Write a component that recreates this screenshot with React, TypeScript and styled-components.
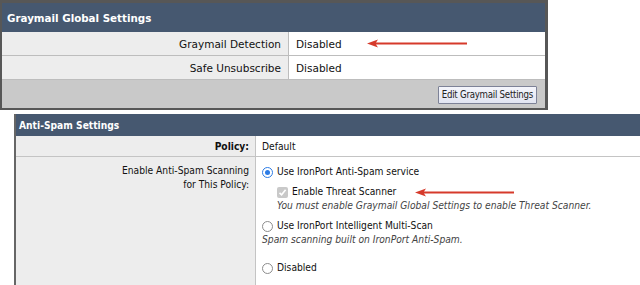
import React from "react";
import styled, { createGlobalStyle } from "styled-components";

const GlobalStyle = createGlobalStyle`
  html, body {
    margin: 0;
    padding: 0;
    background: #ffffff;
    overflow: hidden;
  }
  body {
    width: 640px;
    height: 285px;
    font-family: "DejaVu Sans", Verdana, sans-serif;
  }
`;

const Page = styled.div`
  display: flex;
  flex-direction: column;
  gap: 4px;
  width: 640px;
  height: 285px;
  overflow: hidden;
`;

/* ---------- Graymail panel ---------- */

const GrayPanel = styled.div`
  width: 543px;
  border-style: solid;
  border-color: #575757;
  border-width: 3px 3px 2px 2px;
  display: flex;
  flex-direction: column;
  font-size: 10.5px;
  color: #111;
`;

const PanelHead = styled.div<{ $small?: boolean }>`
  background: #465870;
  color: #fff;
  font-weight: bold;
  display: flex;
  align-items: center;
  height: ${(p) => (p.$small ? "22px" : "29px")};
  padding-left: ${(p) => (p.$small ? "3px" : "5px")};
  font-size: ${(p) => (p.$small ? "10.2px" : "10.3px")};
`;

const GrayRow = styled.div`
  display: grid;
  grid-template-columns: 287px 1fr;
  height: 23px;
  border-bottom: 1px solid #bdbdbd;
`;

const LabelCell = styled.div`
  background: #ededed;
  border-right: 1px solid #bdbdbd;
  display: flex;
  align-items: center;
  justify-content: flex-end;
  padding-right: 7px;
`;

const ValueCell = styled.div`
  background: #fff;
  display: flex;
  align-items: center;
  padding-left: 7px;
`;

const Footer = styled.div`
  background: #c9c9c9;
  height: 28px;
  display: flex;
  align-items: center;
  justify-content: flex-end;
  padding-right: 8px;
`;

const EditButton = styled.button`
  font-family: "DejaVu Sans Condensed", "DejaVu Sans", sans-serif;
  font-size: 9.6px;
  letter-spacing: -0.25px;
  color: #222;
  height: 18px;
  padding: 0 3px;
  border: 1px solid #7d8297;
  background: linear-gradient(#f4f5fb, #e2e5f2);
  border-radius: 1px;
  margin-top: 1px;
`;

/* ---------- Anti-spam panel ---------- */

const SpamPanel = styled.div`
  margin-left: 14px;
  width: 700px;
  border-left: 2px solid #666;
  display: flex;
  flex-direction: column;
  flex: 1;
  font-family: "DejaVu Sans Condensed", "DejaVu Sans", sans-serif;
  font-size: 10.2px;
  color: #111;
`;

const SpamRow = styled.div<{ $grow?: boolean }>`
  display: grid;
  grid-template-columns: 240px 1fr;
  min-height: 20px;
  flex: ${(p) => (p.$grow ? 1 : "none")};
  border-bottom: ${(p) => (p.$grow ? "none" : "1px solid #c4c4c4")};
`;

const SpamLabel = styled.div<{ $bold?: boolean }>`
  background: #ededed;
  border-right: 1px solid #c4c4c4;
  text-align: right;
  padding: ${(p) => (p.$bold ? "4px 6px 0 0" : "7px 6px 0 0")};
  font-weight: ${(p) => (p.$bold ? "bold" : "normal")};
  line-height: 14px;
`;

const SpamValue = styled.div`
  background: #fff;
  padding: 4px 0 0 6px;
  line-height: 14px;
`;

const Options = styled.div`
  display: flex;
  flex-direction: column;
  padding-top: 4px;
`;

const OptionLine = styled.div`
  display: flex;
  align-items: center;
  gap: 4px;
  height: 14px;
`;

const SubBlock = styled.div`
  padding-left: 15px;
  margin-top: 6px;
`;

const Note = styled.div`
  font-style: italic;
  color: #444;
  line-height: 14px;
`;

const Spacer = styled.div<{ $h: number }>`
  height: ${(p) => p.$h}px;
`;

const RadioDot = styled.span<{ $on?: boolean }>`
  width: 11px;
  height: 11px;
  box-sizing: border-box;
  border-radius: 50%;
  border: ${(p) => (p.$on ? "1.5px solid #2c7be5" : "1px solid #8c8c8c")};
  background: #fff;
  display: inline-flex;
  align-items: center;
  justify-content: center;
  flex: none;
  &::after {
    content: "";
    width: 5px;
    height: 5px;
    border-radius: 50%;
    background: ${(p) => (p.$on ? "#2c7be5" : "transparent")};
  }
`;

const CheckBox = styled.span`
  width: 11px;
  height: 11px;
  border-radius: 2px;
  background: #c9c9c9;
  display: inline-flex;
  align-items: center;
  justify-content: center;
  flex: none;
`;

const Arrow = ({ width, gap }: { width: number; gap: number }) => (
  <svg width={width} height="9" viewBox={`0 0 ${width} 9`} style={{ marginLeft: gap, flex: "none" }}>
    <path d={`M0 4.5 L11 0.5 L9 3.5 L${width} 3.5 L${width} 5.5 L9 5.5 L11 8.5 Z`} fill="#d63a2b" />
  </svg>
);

export default function App() {
  return (
    <Page>
      <GlobalStyle />
      <GrayPanel>
        <PanelHead>Graymail Global Settings</PanelHead>
        <GrayRow>
          <LabelCell>Graymail Detection</LabelCell>
          <ValueCell>
            Disabled
            <Arrow width={100} gap={25} />
          </ValueCell>
        </GrayRow>
        <GrayRow>
          <LabelCell>Safe Unsubscribe</LabelCell>
          <ValueCell>Disabled</ValueCell>
        </GrayRow>
        <Footer>
          <EditButton>Edit Graymail Settings</EditButton>
        </Footer>
      </GrayPanel>

      <SpamPanel>
        <PanelHead $small>Anti-Spam Settings</PanelHead>
        <SpamRow>
          <SpamLabel $bold>Policy:</SpamLabel>
          <SpamValue>Default</SpamValue>
        </SpamRow>
        <SpamRow $grow>
          <SpamLabel>
            Enable Anti-Spam Scanning
            <br />
            for This Policy:
          </SpamLabel>
          <SpamValue>
            <Options>
              <OptionLine>
                <RadioDot $on />
                Use IronPort Anti-Spam service
              </OptionLine>
              <SubBlock>
                <OptionLine>
                  <CheckBox>
                    <svg width="9" height="9" viewBox="0 0 9 9">
                      <path d="M1.5 4.8 L3.6 6.8 L7.6 1.8" stroke="#fff" strokeWidth="1.6" fill="none" />
                    </svg>
                  </CheckBox>
                  Enable Threat Scanner
                  <Arrow width={99} gap={15} />
                </OptionLine>
                <Note>You must enable Graymail Global Settings to enable Threat Scanner.</Note>
              </SubBlock>
              <Spacer $h={6} />
              <OptionLine>
                <RadioDot />
                Use IronPort Intelligent Multi-Scan
              </OptionLine>
              <Note>Spam scanning built on IronPort Anti-Spam.</Note>
              <Spacer $h={14} />
              <OptionLine>
                <RadioDot />
                Disabled
              </OptionLine>
            </Options>
          </SpamValue>
        </SpamRow>
      </SpamPanel>
    </Page>
  );
}
